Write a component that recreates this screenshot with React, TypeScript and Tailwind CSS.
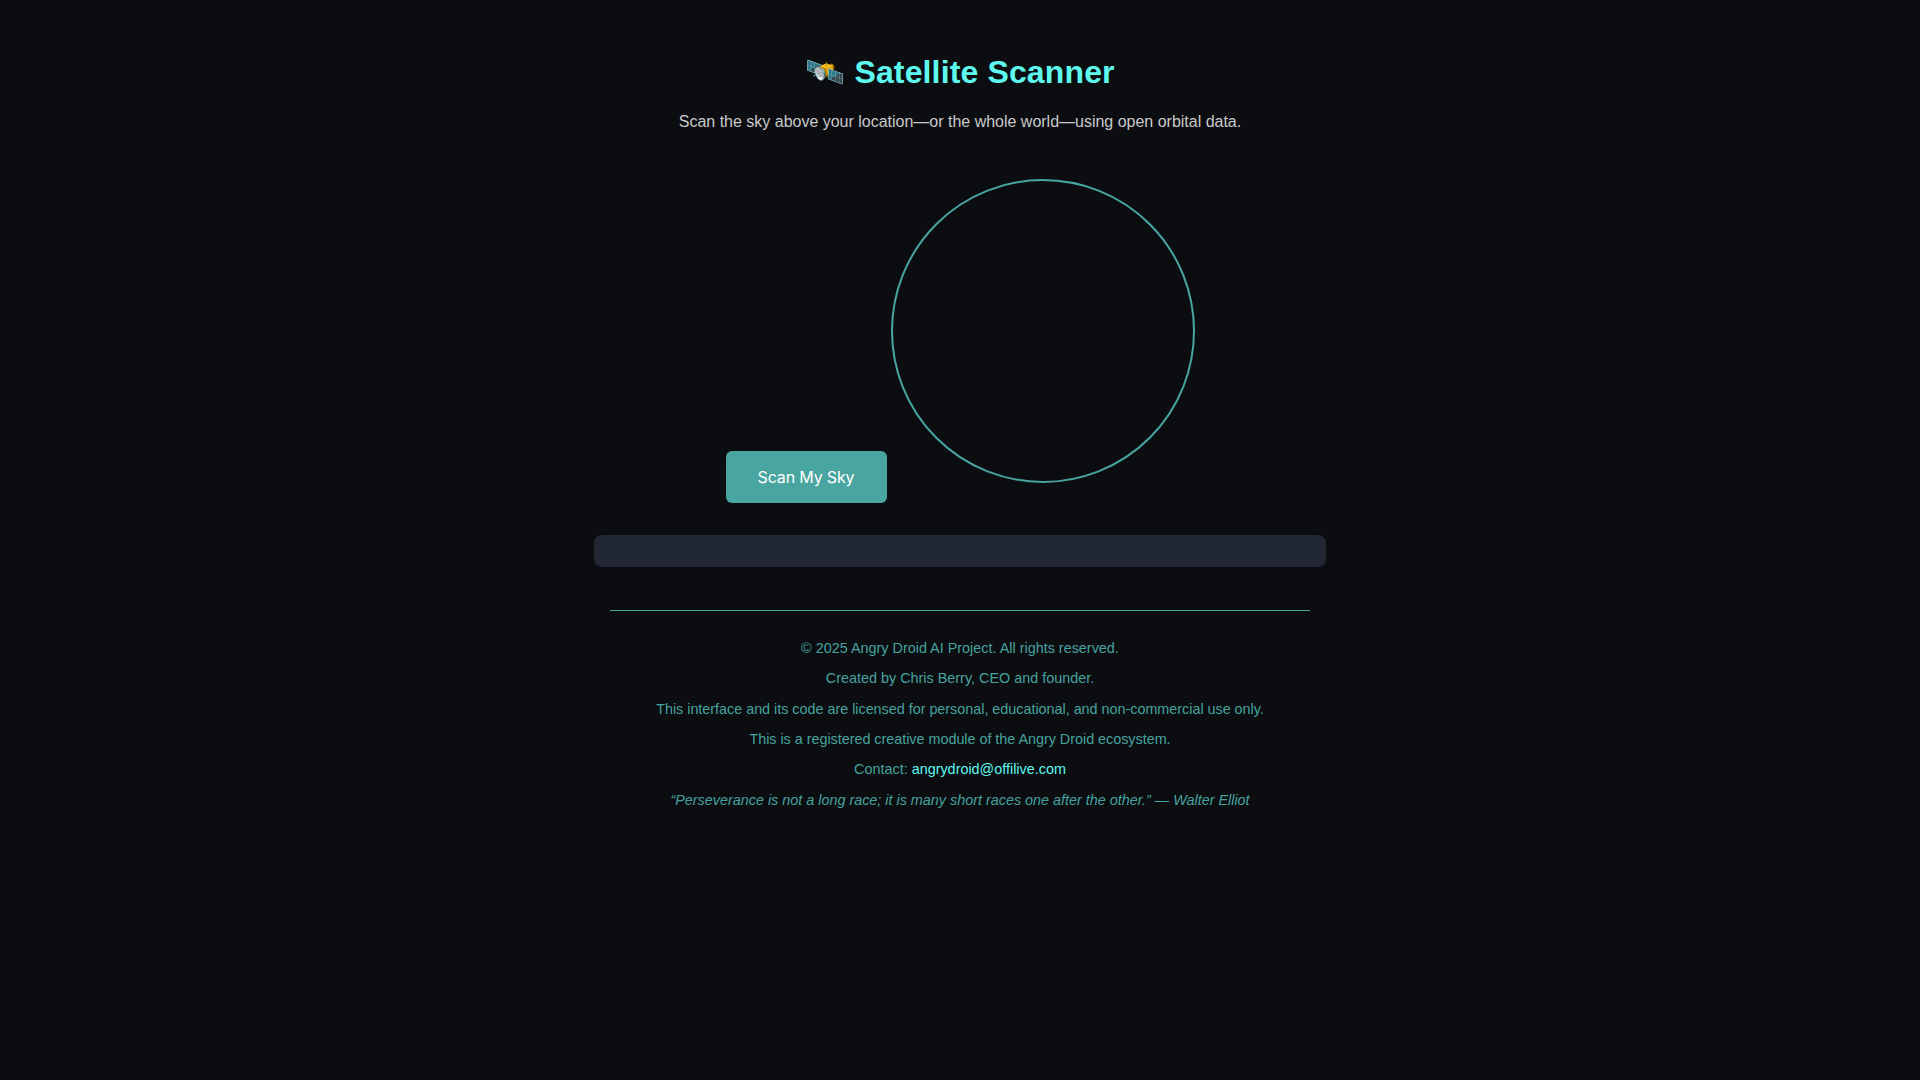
export default function App() {
  return (
    <div className="min-h-screen bg-[#0b0d11] py-8 text-center font-['Liberation_Sans',Arial,sans-serif] text-[#cccccc]">
      <h1 className="mt-[22px] mb-[22px] text-[32px] leading-[37px] font-bold tracking-[0.14px] text-[#5ffbf1] opacity-[0.99]">🛰️ Satellite Scanner</h1>
      <p className="text-base leading-[18px] tracking-[-0.008px] opacity-[0.99]">Scan the sky above your location—or the whole world—using open orbital data.</p>

      <div className="mt-[48px]">
        <button className="mr-1 h-[52px] w-[161px] rounded-md bg-[#48a5a0] font-['Inter',sans-serif] text-base font-normal tracking-[-0.16px] text-white">
          Scan My Sky
        </button>
        <div className="inline-block h-[304px] w-[304px] rounded-full border-2 border-[#48a5a0]" />
      </div>

      <div className="mx-auto mt-[32px] h-8 w-[732px] rounded-lg bg-[#212833]" />

      <footer className="mx-auto mt-[43px] w-[700px] border-t border-[#48a5a0] pt-[29px] text-[14.4px] text-[#48a5a0]">
        <div className="opacity-[0.99]">
          <p className="mb-[13px] leading-[17px]">© 2025 Angry Droid AI Project. All rights reserved.</p>
          <p className="mb-[14px] leading-[17px]">Created by Chris Berry, CEO and founder.</p>
          <p className="mb-[13px] leading-[17px] tracking-[-0.025px]">This interface and its code are licensed for personal, educational, and non-commercial use only.</p>
          <p className="mb-[13px] leading-[17px] tracking-[-0.03px]">This is a registered creative module of the Angry Droid ecosystem.</p>
          <p className="mb-[14px] leading-[17px]">
            Contact: <a href="#" className="text-[#5ffbf1]">angrydroid@offilive.com</a>
          </p>
          <p className="leading-[17px] tracking-[-0.008px] italic">“Perseverance is not a long race; it is many short races one after the other.” — Walter Elliot</p>
        </div>
      </footer>
    </div>
  );
}
